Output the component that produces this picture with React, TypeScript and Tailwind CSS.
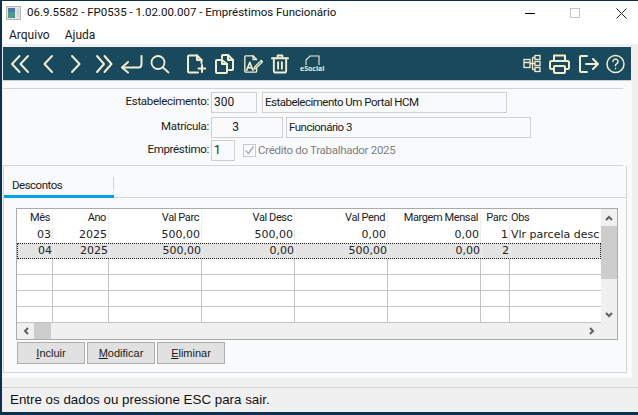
const CREAM = "#f3edcf";

function Ico({ w, d, className = "" }: { w: number; d: string[]; className?: string }) {
  return (
    <svg width={w} height={24} viewBox={`0 0 ${w} 24`} fill="none" stroke={CREAM} strokeWidth={2} strokeLinecap="round" strokeLinejoin="round" className={`shrink-0 ${className}`}>
      {d.map((p, i) => (
        <path key={i} d={p} />
      ))}
    </svg>
  );
}

const columns = [
  { label: "Mês", w: "w-[36px]" },
  { label: "Ano", w: "w-[56px]" },
  { label: "Val Parc", w: "w-[93px]" },
  { label: "Val Desc", w: "w-[93px]" },
  { label: "Val Pend", w: "w-[93px]" },
  { label: "Margem Mensal", w: "w-[93px]" },
  { label: "Parc", w: "w-[29px]" },
];

const rows = [
  ["03", "2025", "500,00", "500,00", "0,00", "0,00", "1"],
  ["04", "2025", "500,00", "0,00", "500,00", "0,00", "2"],
  ["", "", "", "", "", "", ""],
  ["", "", "", "", "", "", ""],
  ["", "", "", "", "", "", ""],
  ["", "", "", "", "", "", ""],
];

function Field({ label, className, children }: { label: string; className: string; children: React.ReactNode }) {
  return (
    <div className={`flex items-center h-[21px] ${className}`}>
      <div className="w-[208px] text-right text-[11.500px] tracking-[-0.3px] text-[#1a1a1a] leading-none pr-[2px] pb-[2px]">{label}</div>
      {children}
    </div>
  );
}

function Box({ w, children, right }: { w: string; children: React.ReactNode; right?: boolean }) {
  return (
    <div className={`${w} h-[21px] border border-[#cfcfcf] px-[2px] text-[11.500px] tracking-[-0.5px] text-[#1a1a1a] leading-[19px] ${right ? "text-right" : ""}`}>
      {children}
    </div>
  );
}

function Btn({ k, rest }: { k: string; rest: string }) {
  return (
    <div className="w-[68px] h-[22px] mr-[2px] border border-[#adadad] bg-[#e1e1e1] flex items-center justify-center text-[11px] text-[#1a1a1a] font-['Liberation_Sans',sans-serif]">
      <span className="underline">{k}</span>
      {rest}
    </div>
  );
}

export default function App() {
  return (
    <div className="w-[638px] h-[415px] overflow-hidden bg-[#0c3050] pt-px pl-[2px] font-['Roboto',sans-serif]">
      <div className="w-[636px] h-[411px] bg-[#f0f0f0] flex flex-col">
        {/* title bar */}
        <div className="h-[24px] bg-white flex items-center shrink-0">
          <svg width="15" height="14" viewBox="0 0 15 14" className="ml-[4px] mr-[6px]">
            <rect x="0.5" y="0.5" width="14" height="13" fill="#e4e4e4" stroke="#b5b5b5" />
            <rect x="2" y="2" width="7" height="10" fill="#4f9a8e" />
            <rect x="2" y="2" width="7" height="4" fill="#4d78a8" />
            <rect x="11" y="3" width="2" height="8" fill="#c9d6e4" />
          </svg>
          <span className="text-[11.500px] text-[#111] leading-none">06.9.5582 - FP0535 - 1.02.00.007 - Empréstimos Funcionário</span>
          <div className="ml-auto flex items-center">
            <div className="w-[10px] h-px bg-black mr-[35px]" />
            <div className="w-[10px] h-[10px] border border-[#c4c4c4] mr-[36px]" />
            <svg width="11" height="11" viewBox="0 0 11 11" stroke="#222" className="mr-[11px]">
              <path d="M.5 .5l10 10M10.5 .5l-10 10" />
            </svg>
          </div>
        </div>
        {/* menu */}
        <div className="h-[19px] bg-white flex items-center pl-[7px] gap-[15px] text-[12px] text-[#1a1a1a] shrink-0">
          <span>Arquivo</span>
          <span>Ajuda</span>
        </div>
        {/* toolbar */}
        <div className="h-[34px] mt-[3px] ml-px w-[628px] bg-[#19495c] border-b border-[#c8d0d4] shrink-0 flex items-center pl-[7px]">
          <Ico w={20} d={["M9.500 4L2 12l7.500 8", "M18 4l-7.500 8 7.500 8"]} />
          <Ico w={12} d={["M10 4L2.500 12l7.500 8"]} className="ml-[12px]" />
          <Ico w={12} d={["M2 4l7.500 8-7.500 8"]} className="ml-[16px]" />
          <Ico w={18} d={["M2 4l7 8-7 8", "M9.500 4l7 8-7 8"]} className="ml-[13px]" />
          <Ico w={23} d={["M21.500 4v8c0 2-1 3.500-3 3.500H2.500", "M8 10l-6 5.500 6 5"]} className="ml-[7px]" />
          <svg width="20" height="24" viewBox="0 0 20 24" fill="none" stroke={CREAM} strokeWidth={1.8} strokeLinecap="round" className="ml-[7px] shrink-0">
            <circle cx="8" cy="10.500" r="6.500" />
            <path d="M13 15.500l5.500 5" />
          </svg>
          <Ico w={20} d={["M11 3.500H3a1 1 0 0 0-1 1v15a1 1 0 0 0 1 1h9", "M11 3.500l4.500 4.500v3", "M11 3.500v4.500h4.500", "M16 13v7M12.500 16.500h7"]} className="ml-[16px]" />
          <Ico w={20} d={["M8 8H3a1 1 0 0 0-1 1v11a1 1 0 0 0 1 1h9a1 1 0 0 0 1-1v-8z", "M8 8v4h5", "M8 6V4a1 1 0 0 1 1-1h5l5 5v9a1 1 0 0 1-1 1h-3", "M14 3v5h5"]} className="ml-[8px]" />
          <svg width="20" height="24" viewBox="0 0 22 24" fill="none" stroke={CREAM} strokeWidth={1.5} strokeLinecap="round" strokeLinejoin="round" className="ml-[9px] shrink-0">
            <path d="M11 3H3a1 1 0 0 0-1 1v16a1 1 0 0 0 1 1h11a1 1 0 0 0 1-1v-3" />
            <path d="M11 3l4 4h-4z" />
            <path d="M4 19l3.500-9 3.500 9M5.200 16h4.600" strokeWidth={1.7} />
            <path d="M13 15l7-7 1.500 1.500-7 7-2.500 1z" />
          </svg>
          <svg width="18" height="24" viewBox="0 0 19 24" fill="none" stroke={CREAM} strokeWidth={2} strokeLinecap="round" strokeLinejoin="round" className="ml-[8px] shrink-0">
            <path d="M1 6h17M7 6V3h5v3" />
            <path d="M3 6v13a2 2 0 0 0 2 2h9a2 2 0 0 0 2-2V6" />
            <path d="M7.500 10v7M11.500 10v7" />
          </svg>
          <div className="relative w-[26px] h-[24px] ml-[10px] shrink-0">
            <svg width="15" height="11" viewBox="0 0 15 11" fill="none" stroke={CREAM} strokeWidth={1.1} className="absolute left-[6px] top-[3px]">
              <path d="M1 10V5l4-4h9v9" />
            </svg>
            <span className="absolute left-px top-[13px] text-[7px] leading-[8px] font-bold text-[#f3edcf] font-['Open_Sans',sans-serif]">eSocial</span>
          </div>
          <div className="ml-auto flex items-center pr-[6px]">
            <svg width="18" height="24" viewBox="0 0 18 24" fill="none" stroke={CREAM} strokeWidth={1.3} className="shrink-0">
              <rect x="12" y="3.500" width="5" height="4" />
              <rect x="12" y="9.500" width="5" height="4" />
              <rect x="12" y="15.500" width="5" height="4" />
              <rect x="1" y="7.500" width="6" height="8" />
              <path d="M1 10.500h6M7 11.500h5M9.500 5.500v12M9.500 5.500h2.500M9.500 17.500h2.500" />
            </svg>
            <svg width="21" height="24" viewBox="0 0 21 24" fill="none" stroke={CREAM} strokeWidth={2} strokeLinecap="round" strokeLinejoin="round" className="ml-[8px] shrink-0">
              <path d="M5 9V3.500h11V9" />
              <path d="M5 17H2.500a1.500 1.500 0 0 1-1.500-1.500V10.500A1.500 1.500 0 0 1 2.500 9h16a1.500 1.500 0 0 1 1.500 1.500v5a1.500 1.500 0 0 1-1.500 1.500H16" />
              <rect x="5" y="14" width="11" height="7" rx="1" />
            </svg>
            <svg width="21" height="24" viewBox="0 0 21 24" fill="none" stroke={CREAM} strokeWidth={2} strokeLinecap="round" strokeLinejoin="round" className="ml-[8px] shrink-0">
              <path d="M9 4H3a1 1 0 0 0-1 1v14a1 1 0 0 0 1 1h6" />
              <path d="M8 12h12M15 7l5 5-5 5" />
            </svg>
            <svg width="19" height="24" viewBox="0 0 19 24" fill="none" stroke={CREAM} strokeWidth={1.5} strokeLinecap="round" className="ml-[7px] shrink-0">
              <circle cx="9.500" cy="12" r="8.500" />
              <path d="M7 9.500a2.500 2.500 0 1 1 3.800 2.200c-.9.500-1.300 1-1.300 2" />
              <path d="M9.500 16.500v.3" />
            </svg>
          </div>
        </div>
        {/* body */}
        <div className="w-[629px] ml-px bg-[#f9fafc] pb-[5px] shrink-0">
          {/* form */}
          <div className="h-[78px] mt-[7px] w-[620px] border-t border-b border-[#d4d4d4] pt-[3px]">
            <Field label="Estabelecimento:" className="mb-[4px]">
              <Box w="w-[46px]"><span className="text-[12px] tracking-normal">300</span></Box>
              <div className="w-[5px]" />
              <Box w="w-[245px]">Estabelecimento Um Portal HCM</Box>
            </Field>
            <Field label="Matrícula:" className="mb-[2px]">
              <Box w="w-[72px]" right>
                <span className="pr-[41px] text-[12px] tracking-normal">3</span>
              </Box>
              <div className="w-[3px]" />
              <Box w="w-[245px]">Funcionário 3</Box>
            </Field>
            <Field label="Empréstimo:" className="">
              <Box w="w-[24px]" right>
                <span className="pr-[12px] text-[12px] tracking-normal">1</span>
              </Box>
              <div className="w-[8px]" />
              <div className="w-[13px] h-[13px] border border-[#c9c9c9] flex items-center justify-center">
                <svg width="11" height="11" viewBox="0 0 11 11" fill="none" stroke="#a9a9a9" strokeWidth={1.3}>
                  <path d="M1.500 5.500l3 3 5-7" />
                </svg>
              </div>
              <span className="ml-[2px] text-[11.500px] tracking-[-0.3px] text-[#808080]">Crédito do Trabalhador 2025</span>
            </Field>
          </div>
          {/* tabs panel */}
          <div className="h-[207px] w-[624px] border-l border-r border-b border-[#d4d4d4] flex flex-col">
            <div className="h-[32px] flex items-end border-b border-[#d4d4d4] shrink-0">
              <div className="w-[110px] h-[21px] border-b-[3px] border-[#00a3e8] -mb-px text-[11.500px] tracking-[-0.5px] text-[#1a1a1a] pl-[8px] leading-[16px] relative">
                Descontos
                <div className="absolute right-0 top-0 w-px h-[13px] bg-[#d4d4d4]" />
              </div>
            </div>
            <div className="ml-[12px] mt-[10px] w-[602px] h-[132px] border border-[#ababab] bg-white relative shrink-0">
              {/* header */}
              <div className="flex h-[18px] w-[584px] overflow-hidden">
                {columns.map((c) => (
                  <div key={c.label} className={`${c.w} shrink-0 text-right text-[11px] tracking-[-0.4px] leading-[18px] text-[#222] pr-[2px] border-r border-[#f2f2f2] whitespace-nowrap`}>
                    {c.label}
                  </div>
                ))}
                <div className="pl-px text-[11px] tracking-[-0.4px] leading-[18px] text-[#222]">Obs</div>
              </div>
              {/* rows */}
              {rows.map((r, i) => (
                <div key={i} className={`flex h-[16px] w-[584px] overflow-hidden ${i === 1 ? "bg-[#e3e3e3] border border-dotted border-[#222]" : i === 0 ? "" : "border-b border-[#c4c4c4]"}`}>
                  {r.map((v, j) => (
                    <div key={j} className={`${columns[j].w} shrink-0 text-right text-[11px] text-[#222] pr-px border-r whitespace-nowrap font-['DejaVu_Sans',sans-serif] ${i === 0 ? "leading-[16px]" : "leading-[14px]"} ${i < 2 ? "border-[#ececec]" : "border-[#c4c4c4]"}`}>
                      {v}
                    </div>
                  ))}
                  {i === 0 && <div className="pl-px text-[11px] leading-[16px] text-[#222] whitespace-nowrap font-['DejaVu_Sans',sans-serif]">Vlr parcela desc</div>}
                </div>
              ))}
              {/* vertical scrollbar */}
              <div className="absolute right-0 top-0 w-[16px] h-[114px] bg-[#f0f0f0] flex flex-col items-center">
                <div className="h-[17px] flex items-center">
                  <svg width="8" height="6" viewBox="0 0 8 6" fill="none" stroke="#606060" strokeWidth={2}><path d="M1 5l3-3 3 3" /></svg>
                </div>
                <div className="w-full h-[53px] bg-[#cdcdcd]" />
                <div className="mt-auto h-[17px] flex items-center">
                  <svg width="8" height="6" viewBox="0 0 8 6" fill="none" stroke="#606060" strokeWidth={2}><path d="M1 1l3 3 3-3" /></svg>
                </div>
              </div>
              {/* horizontal scrollbar */}
              <div className="absolute left-0 bottom-0 w-full h-[16px] bg-[#f0f0f0] flex items-center">
                <div className="w-[17px] flex justify-center">
                  <svg width="6" height="8" viewBox="0 0 6 8" fill="none" stroke="#606060" strokeWidth={2}><path d="M5 1L2 4l3 3" /></svg>
                </div>
                <div className="w-[17px] h-full bg-[#cdcdcd]" />
                <div className="ml-auto mr-[22px] flex">
                  <svg width="6" height="8" viewBox="0 0 6 8" fill="none" stroke="#606060" strokeWidth={2}><path d="M1 1l3 3-3 3" /></svg>
                </div>
              </div>
            </div>
            <div className="flex ml-[13px] mt-[2px]">
              <Btn k="I" rest="ncluir" />
              <Btn k="M" rest="odificar" />
              <Btn k="E" rest="liminar" />
            </div>
          </div>
        </div>
        {/* status */}
        <div className="mt-[9px] border-t border-[#d4d4d4] h-[25px] text-[13.350px] text-[#111] pl-[8px] leading-[23px] shrink-0 font-['Liberation_Sans',sans-serif]">
          Entre os dados ou pressione ESC para sair.
        </div>
      </div>
    </div>
  );
}
